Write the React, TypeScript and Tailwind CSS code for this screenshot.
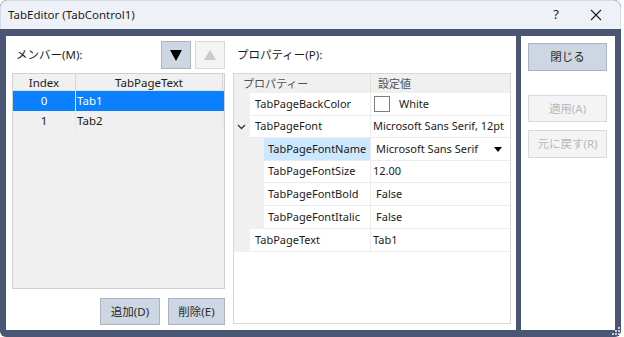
import React from "react";

const F = "font-['Noto_Sans','Noto_Sans_CJK_JP',sans-serif]";

type Row = {
  name: string;
  value: string;
  h: number;
  child?: boolean;
  expand?: boolean;
  selected?: boolean;
  swatch?: boolean;
  dropdown?: boolean;
  inset?: boolean;
};

const rows: Row[] = [
  { name: "TabPageBackColor", value: "White", h: 23, swatch: true },
  { name: "TabPageFont", value: "Microsoft Sans Serif, 12pt", h: 22, expand: true },
  { name: "TabPageFontName", value: "Microsoft Sans Serif", h: 23, child: true, selected: true, dropdown: true, inset: true },
  { name: "TabPageFontSize", value: "12.00", h: 22, child: true },
  { name: "TabPageFontBold", value: "False", h: 23, child: true, inset: true },
  { name: "TabPageFontItalic", value: "False", h: 23, child: true, inset: true },
  { name: "TabPageText", value: "Tab1", h: 23 },
];

function BlueButton({ children, className }: { children: React.ReactNode; className: string }) {
  return (
    <div
      className={
        "flex items-center justify-center bg-[#cdd6e3] border border-[#aeb4bd] text-[#2b2b2b] text-[11.5px] " +
        className
      }
    >
      {children}
    </div>
  );
}

function DisabledButton({ children, className }: { children: React.ReactNode; className: string }) {
  return (
    <div
      className={
        "flex items-center justify-center bg-[#f4f4f4] border border-[#d9d9d9] text-[#b8b8b8] text-[11.5px] " +
        className
      }
    >
      {children}
    </div>
  );
}

export default function App() {
  return (
    <div className={"w-[624px] h-[337px] bg-white relative " + F}>
      <div className="w-[621px] h-[337px] flex flex-col rounded-t-[7px] rounded-b-[6px] overflow-hidden bg-[#4b5674]">
        {/* Title bar */}
        <div className="h-[29px] bg-[#eef2f8] border-t border-l border-r border-[#d6dbe3] rounded-t-[7px] flex items-center pl-[7px] text-[11.5px] text-[#1b1b1b]">
          <span className="flex-1">TabEditor (TabControl1)</span>
          <span className="w-[20px] text-center mr-[24px] text-[13px]">?</span>
          <svg width="12" height="12" viewBox="0 0 12 12" className="mr-[18px]">
            <path d="M1 1 L11 11 M11 1 L1 11" stroke="#1b1b1b" strokeWidth="1.1" />
          </svg>
        </div>

        {/* Body */}
        <div className="flex-1 flex pt-[7px] pb-[7px] pl-[6px] pr-[6px] gap-[5px]">
          {/* Left panel */}
          <div className="w-[510px] bg-white flex pt-[5px] pl-[6px] gap-[8px] text-[#1b1b1b] text-[11px] whitespace-nowrap">
            {/* Members column */}
            <div className="w-[213px] flex flex-col">
              <div className="h-[28px] flex items-center">
                <span className="flex-1 pl-[4px] text-[11.5px]">メンバー(M):</span>
                <div className="w-[30px] h-[28px] bg-[#cdd6e3] border border-[#aeb4bd] flex items-center justify-center mr-[4px]">
                  <svg width="12" height="11" viewBox="0 0 12 11">
                    <path d="M0 0 H12 L6 11 Z" fill="#000" />
                  </svg>
                </div>
                <div className="w-[30px] h-[28px] bg-[#f4f4f4] border border-[#d9d9d9] flex items-center justify-center">
                  <svg width="12" height="10" viewBox="0 0 12 10">
                    <path d="M0 10 H12 L6 0 Z" fill="#c9c9c9" />
                  </svg>
                </div>
              </div>
              <div className="mt-[4px] h-[216px] bg-[#f0f0f0] border border-[#d0d0d0] flex flex-col">
                <div className="h-[17px] flex bg-[#f0f0f0] border-b border-[#e2e2e2] text-[11.5px]">
                  <div className="w-[63px] border-r border-[#d6d6d6] text-center leading-[17px]">Index</div>
                  <div className="w-[147px] border-r border-[#d6d6d6] text-center leading-[17px]">TabPageText</div>
                </div>
                <div className="h-[20px] flex bg-[#0a80ff] text-white text-[11.5px]">
                  <div className="w-[63px] border-r border-[#dfe9f5] text-center leading-[20px]">0</div>
                  <div className="w-[147px] pl-[1px] leading-[20px]">Tab1</div>
                </div>
                <div className="h-[20px] flex text-[11.5px]">
                  <div className="w-[63px] border-r border-[#e6e6e6] text-center leading-[20px]">1</div>
                  <div className="w-[147px] pl-[1px] leading-[20px] border-r border-[#e6e6e6]">Tab2</div>
                </div>
              </div>
              <div className="mt-[9px] flex justify-end gap-[8px]">
                <BlueButton className="w-[60px] h-[27px]">追加(D)</BlueButton>
                <BlueButton className="w-[57px] h-[27px]">削除(E)</BlueButton>
              </div>
            </div>

            {/* Properties column */}
            <div className="w-[278px] flex flex-col">
              <div className="h-[28px] flex items-center pl-[4px] text-[11.5px]">プロパティー(P):</div>
              <div className="mt-[4px] h-[251px] bg-white border border-[#d8d8d8] flex flex-col">
                <div className="h-[19px] flex bg-[#f0f0f0] text-[#505050]">
                  <div className="w-[137px] pl-[9px] leading-[19px] border-r border-[#dedede]">プロパティー</div>
                  <div className="flex-1 pl-[7px] leading-[19px]">設定値</div>
                </div>
                {rows.map((r) => (
                  <div key={r.name} className="flex" style={{ height: r.h }}>
                    <div className={(r.child ? "w-[30px]" : "w-[16px]") + " bg-[#f0f0f0] flex items-center justify-center"}>
                      {r.expand && (
                        <svg width="9" height="6" viewBox="0 0 9 6" className="ml-[-1px]">
                          <path d="M1 1 L4.5 4.5 L8 1" stroke="#333" strokeWidth="1.3" fill="none" />
                        </svg>
                      )}
                    </div>
                    <div
                      className={
                        (r.child ? "w-[107px] pl-[4px]" : "w-[121px] pl-[5px]") +
                        " flex items-center border-r border-b border-[#ececec] " +
                        (r.selected ? "bg-[#cce8ff]" : "bg-white")
                      }
                    >
                      {r.name}
                    </div>
                    <div
                      className={
                        "flex-1 flex items-center border-b border-[#ececec] " +
                        (r.inset ? "pl-[5px]" : "pl-[2px]")
                      }
                    >
                      {r.swatch && (
                        <div className="w-[16px] h-[16px] border border-[#7d7d7d] bg-white mr-[9px] ml-[1px]" />
                      )}
                      <span className="flex-1">{r.value}</span>
                      {r.dropdown && (
                        <svg width="8" height="5" viewBox="0 0 8 5" className="mr-[8px]">
                          <path d="M0 0 H8 L4 5 Z" fill="#000" />
                        </svg>
                      )}
                    </div>
                  </div>
                ))}
              </div>
            </div>
          </div>

          {/* Right panel */}
          <div className="flex-1 bg-white flex flex-col pt-[7px] pl-[7px] pr-[8px]">
            <BlueButton className="h-[28px]">閉じる</BlueButton>
            <DisabledButton className="h-[27px] mt-[24px]">適用(A)</DisabledButton>
            <DisabledButton className="h-[28px] mt-[8px]">元に戻す(R)</DisabledButton>
          </div>
        </div>
      </div>
      {/* resize grip */}
      <div className="absolute right-[4px] bottom-[2px] w-[10px] h-[10px]">
        <div className="absolute right-0 bottom-0 w-[2px] h-[2px] bg-[#c8ccd4]" />
        <div className="absolute right-[3px] bottom-0 w-[2px] h-[2px] bg-[#c8ccd4]" />
        <div className="absolute right-[6px] bottom-0 w-[2px] h-[2px] bg-[#c8ccd4]" />
        <div className="absolute right-0 bottom-[3px] w-[2px] h-[2px] bg-[#c8ccd4]" />
        <div className="absolute right-[3px] bottom-[3px] w-[2px] h-[2px] bg-[#c8ccd4]" />
        <div className="absolute right-0 bottom-[6px] w-[2px] h-[2px] bg-[#c8ccd4]" />
      </div>
    </div>
  );
}
